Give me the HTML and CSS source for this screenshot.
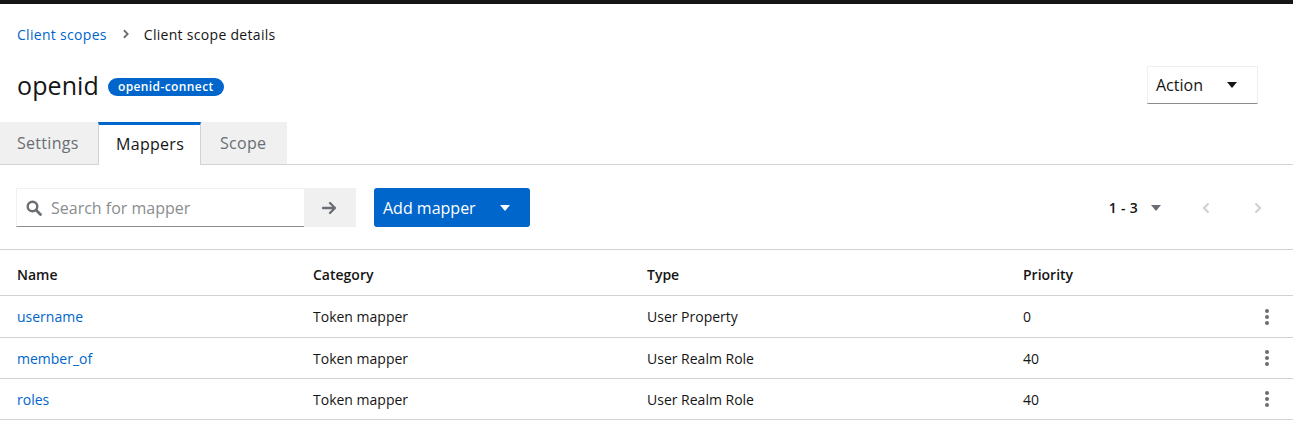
FILE: index.html
```html
<!DOCTYPE html>
<html>
<head>
<meta charset="utf-8">
<link rel="stylesheet" href="styles.css">
</head>
<body>
<div class="topbar"></div>
<div class="page-head">
  <nav class="breadcrumb">
    <a class="crumb-link">Client scopes</a>
    <svg class="crumb-sep" width="8" height="10" viewBox="0 0 8 12"><path d="M1.5 1.5 L6 6 L1.5 10.5" fill="none" stroke="#6a6e73" stroke-width="2.2"/></svg>
    <span class="crumb-current">Client scope details</span>
  </nav>
  <div class="title-row">
    <div class="title-left">
      <h1 class="title">openid</h1>
      <span class="badge">openid-connect</span>
    </div>
    <button class="action-btn">Action <svg class="caret" width="10" height="6" viewBox="0 0 10 6"><path d="M0 0 H10 L5 6 Z" fill="#151515"/></svg></button>
  </div>
</div>
<div class="tabs">
  <div class="tab t-settings">Settings</div>
  <div class="tab active">Mappers</div>
  <div class="tab t-scope">Scope</div>
</div>
<div class="toolbar">
  <div class="search-group">
    <div class="search-input">
      <svg class="search-icon" width="16" height="16" viewBox="0 0 16 16"><circle cx="6.5" cy="6.5" r="4.8" fill="none" stroke="#6a6e73" stroke-width="2.4"/><path d="M10 10 L14.5 14.5" stroke="#6a6e73" stroke-width="2.8" stroke-linecap="round"/></svg>
      <span class="placeholder">Search for mapper</span>
    </div>
    <button class="search-btn"><svg width="16" height="14" viewBox="0 0 16 14"><path d="M1 7 H13 M8 2 L13 7 L8 12" fill="none" stroke="#6a6e73" stroke-width="2.3" stroke-linecap="round" stroke-linejoin="round"/></svg></button>
  </div>
  <button class="primary-btn">Add mapper <svg class="caret" width="10" height="6" viewBox="0 0 10 6"><path d="M0 0 H10 L5 6 Z" fill="#fff"/></svg></button>
  <div class="spacer"></div>
  <div class="pagination">
    <span class="page-range">1 - 3</span>
    <svg class="page-caret" width="10" height="6" viewBox="0 0 10 6"><path d="M0 0 H10 L5 6 Z" fill="#6a6e73"/></svg>
    <svg class="page-nav prev" width="8" height="12" viewBox="0 0 8 12"><path d="M6.5 1.5 L2 6 L6.5 10.5" fill="none" stroke="#d2d2d2" stroke-width="2.2"/></svg>
    <svg class="page-nav next" width="8" height="12" viewBox="0 0 8 12"><path d="M1.5 1.5 L6 6 L1.5 10.5" fill="none" stroke="#d2d2d2" stroke-width="2.2"/></svg>
  </div>
</div>
<table class="table">
  <thead>
    <tr><th class="c-name">Name</th><th class="c-cat">Category</th><th class="c-type">Type</th><th class="c-prio">Priority</th><th class="c-act"></th></tr>
  </thead>
  <tbody>
    <tr class="r1"><td><a class="link">username</a></td><td>Token mapper</td><td>User Property</td><td>0</td><td class="c-act"><span class="kebab"><i></i><i></i><i></i></span></td></tr>
    <tr><td><a class="link">member_of</a></td><td>Token mapper</td><td>User Realm Role</td><td>40</td><td class="c-act"><span class="kebab"><i></i><i></i><i></i></span></td></tr>
    <tr><td><a class="link">roles</a></td><td>Token mapper</td><td>User Realm Role</td><td>40</td><td class="c-act"><span class="kebab"><i></i><i></i><i></i></span></td></tr>
  </tbody>
</table>
</body>
</html>
```

FILE: styles.css
```css
* { box-sizing: border-box; }
body {
  margin: 0;
  font-family: "Open Sans", "Noto Sans", "Liberation Sans", sans-serif;
  font-size: 14px;
  color: #151515;
  background: #fff;
}
.topbar { height: 4px; background: #151515; }
.page-head { padding: 19px 35px 0 17px; }
.breadcrumb { display: flex; align-items: center; height: 22px; font-size: 14px; letter-spacing: 0.3px; }
.crumb-link { color: #0066cc; }
.crumb-sep { margin: 0 14px 0 15px; }
.crumb-current { color: #151515; }
.title-row { display: flex; align-items: center; justify-content: space-between; margin-top: 21px; height: 38px; }
.title-left { display: flex; align-items: center; }
.title { margin: 0; font-size: 25px; font-weight: 400; letter-spacing: 0.1px; line-height: 30px; }
.badge {
  margin-left: 9px; margin-top: 3px;
  background: #0066cc; color: #fff;
  font-size: 12px; font-weight: 600; letter-spacing: 0.4px;
  border-radius: 30px; padding: 0 10px; line-height: 18px;
}
.action-btn {
  display: flex; align-items: center; justify-content: space-between;
  width: 111px; height: 38px;
  padding: 0 20px 0 8px;
  font: inherit; font-size: 16px; color: #151515;
  background: #fff;
  border: 1px solid #f0f0f0; border-bottom-color: #8a8d90;
}
.tabs { display: flex; margin-top: 18px; border-bottom: 1px solid #d2d2d2; height: 43px; }
.tab {
  background: #f0f0f0; color: #6a6e73; font-size: 16px; letter-spacing: 0.3px;
  padding: 0 0 0 17px; display: flex; align-items: center;
  height: 42px;
}
.t-settings { width: 98px; }
.t-scope { width: 86px; padding-left: 19px; }
.tab.active {
  background: #fff; color: #151515;
  border-top: 3px solid #0066cc;
  border-left: 1px solid #d2d2d2; border-right: 1px solid #d2d2d2;
  width: 103px;
  height: 43px; margin-bottom: -1px; padding: 0 0 3px 17px;
}
.toolbar { display: flex; align-items: center; padding: 23px 16px 22px 16px; }
.search-group { display: flex; }
.search-input {
  width: 288px; height: 39px;
  display: flex; align-items: center;
  border: 1px solid #f0f0f0; border-bottom: 1px solid #8a8d90; border-right: none;
  padding-left: 9px;
}
.search-icon { margin-right: 9px; }
.placeholder { color: #8a8d90; font-size: 16px; }
.search-btn {
  width: 52px; height: 39px; border: none; background: #f0f0f0;
  display: flex; align-items: center; justify-content: center;
}
.primary-btn {
  margin-left: 18px;
  display: flex; align-items: center;
  height: 39px; width: 156px;
  padding: 0 0 0 9px;
  background: #0066cc; color: #fff; border: none; border-radius: 3px;
  font: inherit; font-size: 16px;
}
.primary-btn .caret { margin-left: 24px; }
.spacer { flex: 1; }
.pagination { display: flex; align-items: center; }
.page-range { font-size: 14px; font-weight: 600; letter-spacing: 0.3px; }
.page-caret { margin-left: 13px; }
.page-nav.prev { margin-left: 41px; }
.page-nav.next { margin-left: 44px; margin-right: 15px; }
.table { width: 100%; border-collapse: collapse; border-top: 1px solid #d2d2d2; }
.table th, .table td { text-align: left; padding: 0; border-bottom: 1px solid #d2d2d2; }
.table th { height: 46px; font-weight: 600; font-size: 14px; padding-top: 3px; }
.table td { height: 41px; font-size: 14px; }
.table tr.r1 td { height: 42px; }
.table th:first-child, .table td:first-child { padding-left: 17px; }
.c-name { width: 313px; }
.c-cat { width: 334px; }
.c-type { width: 376px; }
.c-act { width: 28px; }
.link { color: #0066cc; }
.kebab { display: flex; flex-direction: column; align-items: center; gap: 2px; width: 4px; }
.kebab i { display: block; width: 4px; height: 4px; border-radius: 50%; background: #6a6e73; }
```
